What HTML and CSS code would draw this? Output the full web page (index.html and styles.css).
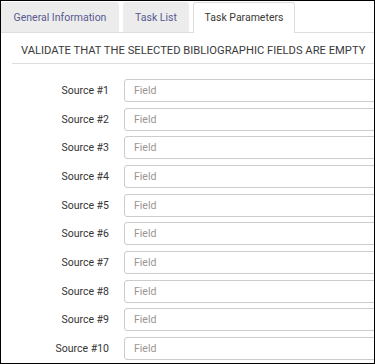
FILE: index.html
```html
<!DOCTYPE html>
<html lang="en">

<head>
    <meta charset="UTF-8">
    <meta name="viewport" content="width=device-width, initial-scale=1.0">
    <title>Task Parameters</title>
    <link rel="stylesheet" href="styles.css">
</head>

<body>
    <div class="frame">
        <ul class="tabs">
            <li class="tab tab-general">General Information</li>
            <li class="tab tab-list">Task List</li>
            <li class="tab tab-params active">Task Parameters</li>
        </ul>

        <h2 class="section-title">VALIDATE THAT THE SELECTED BIBLIOGRAPHIC FIELDS ARE EMPTY</h2>

        <div class="fields">
            <div class="row"><label>Source #1</label><input type="text" placeholder="Field"></div>
            <div class="row"><label>Source #2</label><input type="text" placeholder="Field"></div>
            <div class="row"><label>Source #3</label><input type="text" placeholder="Field"></div>
            <div class="row"><label>Source #4</label><input type="text" placeholder="Field"></div>
            <div class="row"><label>Source #5</label><input type="text" placeholder="Field"></div>
            <div class="row"><label>Source #6</label><input type="text" placeholder="Field"></div>
            <div class="row"><label>Source #7</label><input type="text" placeholder="Field"></div>
            <div class="row"><label>Source #8</label><input type="text" placeholder="Field"></div>
            <div class="row"><label>Source #9</label><input type="text" placeholder="Field"></div>
            <div class="row"><label>Source #10</label><input type="text" placeholder="Field"></div>
        </div>
    </div>
</body>

</html>
```

FILE: styles.css
```css
 *{
     margin:0;
     padding:0;
     box-sizing:border-box;
 }
 body{
     font-family: Roboto, "Liberation Sans", sans-serif;
     font-size:10.5px;
     color:#333;
 }
 .frame{
     width:375px;
     height:364px;
     border:1px solid #000;
     overflow:hidden;
     background:#fff;
 }
 .tabs{
     list-style:none;
     display:flex;
     gap:4px;
     padding-top:1px;
     border-bottom:1px solid #ddd;
 }
 .tab{
     height:30px;
     line-height:30px;
     text-align:center;
     white-space:nowrap;
     background:#ececec;
     color:#58598f;
     border:1px solid #ececec;
     border-bottom:none;
     border-radius:3px 3px 0 0;
     margin-bottom:-1px;
 }
 .tab-general{
     width:118px;
 }
 .tab-list{
     width:66px;
 }
 .tab-params{
     width:102px;
 }
 .tab.active{
     background:#fff;
     color:#3d3a36;
     border-color:#ddd;
     height:31px;
 }
 .section-title{
     margin-left:11px;
     padding:10px 0 4px 9px;
     line-height:16px;
     font-size:11.2px;
     font-weight:normal;
     white-space:nowrap;
     color:#3a3a3a;
     border-bottom:1px solid #ddd;
 }
 .fields{
     padding-top:15px;
 }
 .row{
     display:flex;
     align-items:center;
     gap:15px;
     height:28.67px;
     padding-bottom:5.67px;
 }
 .row label{
     width:108px;
     flex-shrink:0;
     text-align:right;
     white-space:nowrap;
     color:#333;
 }
 .row input{
     width:300px;
     height:23px;
     flex-shrink:0;
     border:1px solid #ccc;
     border-radius:3px;
     padding-left:9px;
     font-family: Roboto, "Liberation Sans", sans-serif;
     font-size:10.5px;
     outline:none;
 }
 .row input::placeholder{
     color:#9a9590;
 }
```
